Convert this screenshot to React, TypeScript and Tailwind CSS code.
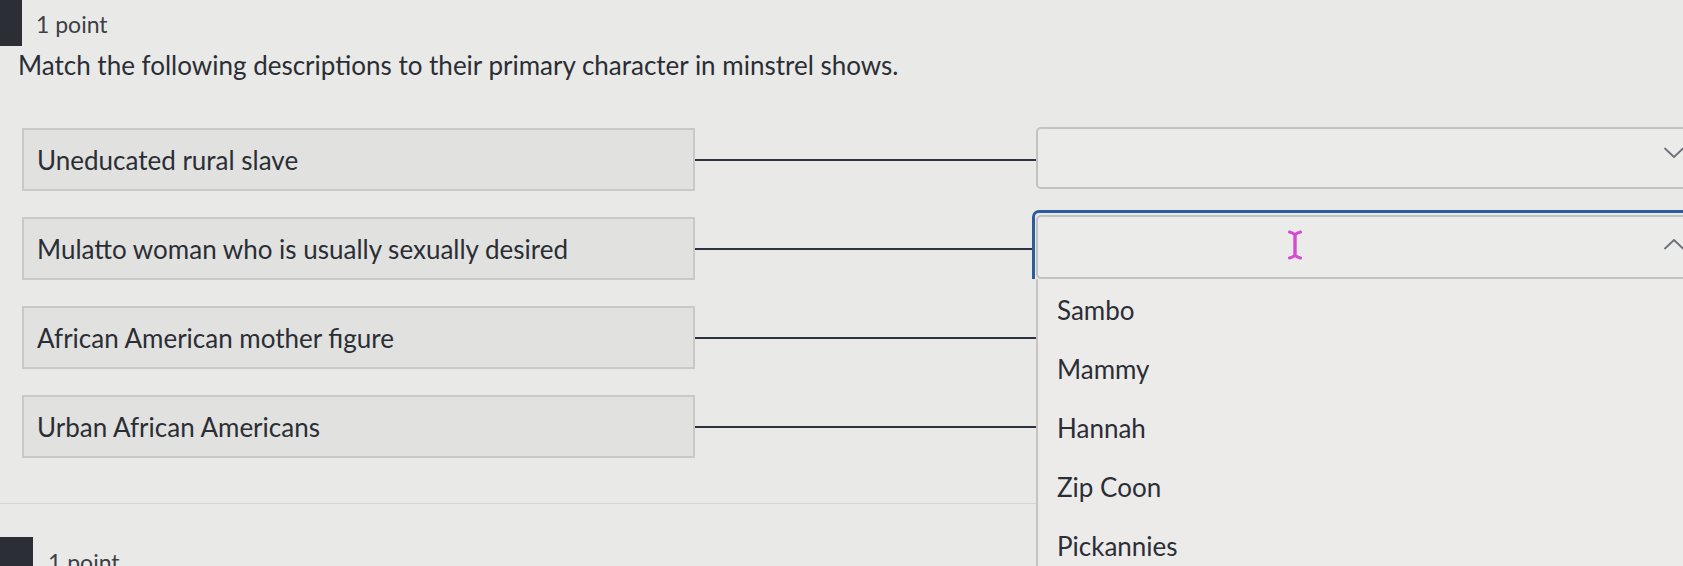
import React from "react";

const rows = [
  "Uneducated rural slave",
  "Mulatto woman who is usually sexually desired",
  "African American mother figure",
  "Urban African Americans",
];

const options = ["Sambo", "Mammy", "Hannah", "Zip Coon", "Pickannies"];

function ChevronDown() {
  return (
    <svg width="20" height="12" viewBox="0 0 20 12" fill="none">
      <polyline points="1,1.5 10,10 19,1.5" stroke="#6d7076" strokeWidth="1.8" strokeLinecap="round" strokeLinejoin="round" />
    </svg>
  );
}

function ChevronUp() {
  return (
    <svg width="20" height="12" viewBox="0 0 20 12" fill="none">
      <polyline points="1,10.5 10,2 19,10.5" stroke="#6d7076" strokeWidth="1.8" strokeLinecap="round" strokeLinejoin="round" />
    </svg>
  );
}

function IBeam() {
  return (
    <svg width="14" height="30" viewBox="0 0 14 30" fill="none">
      <path d="M1.5 2 Q4 2.5 7 4.5 Q10 2.5 12.5 2" stroke="#d44bd2" strokeWidth="3" strokeLinecap="round" />
      <path d="M1.5 28 Q4 27.5 7 25.5 Q10 27.5 12.5 28" stroke="#d44bd2" strokeWidth="3" strokeLinecap="round" />
      <line x1="7" y1="4" x2="7" y2="26" stroke="#d44bd2" strokeWidth="3.4" />
    </svg>
  );
}

export default function App() {
  return (
    <div className="relative w-[1683px] h-[566px] overflow-hidden bg-[#e9e9e7] font-['Lato','Open_Sans',sans-serif] text-[#2b2e35]">
      {/* header */}
      <div className="flex items-start h-[46px]">
        <div className="w-[22px] h-[46px] bg-[#2b2e34]" />
        <span className="ml-[14px] mt-[10px] text-[23px] leading-[28px] text-[#3c3f46]">1 point</span>
      </div>

      <p className="ml-[18px] mt-[4px] text-[26px] leading-[30px] text-[#2b2e35]">
        Match the following descriptions to their primary character in minstrel shows.
      </p>

      {/* matching rows */}
      <div className="mt-[48px] flex flex-col gap-[26px]">
        {rows.map((text, i) => (
          <div key={text} className="flex items-center h-[63px]">
            <div className="ml-[22px] w-[673px] h-[63px] shrink-0 flex items-center pl-[13px] bg-[#e1e1df] border-2 border-[#c9c9c7] text-[26px] leading-[30px]">
              {text}
            </div>
            <div className={(i === 1 ? "w-[337px]" : "w-[341px]") + " h-[2px] shrink-0 bg-[#2e3340]"} />
            {i === 0 && (
              <div className="w-[670px] shrink-0 h-[62px] -mt-[4px] flex items-center justify-end pr-[20px] bg-[#ebebea] border-2 border-[#c2c2c0] rounded-[5px]">
                <div className="-mt-[10px]">
                  <ChevronDown />
                </div>
              </div>
            )}
            {i === 1 && (
              <div className="relative w-[674px] shrink-0 -mt-[8px]">
                <div className="pt-[2px] pl-[1px] border-t-[3px] border-l-[3px] border-[#2c5c9b] rounded-tl-[7px]">
                  <div className="relative h-[64px] flex items-center justify-end pr-[20px] bg-[#ebebea] border-2 border-[#c2c2c0] rounded-[5px]">
                    <div className="absolute left-[250px] top-[13px]">
                      <IBeam />
                    </div>
                    <div className="-mt-[6px]">
                      <ChevronUp />
                    </div>
                  </div>
                </div>
                {/* open listbox */}
                <ul className="absolute left-[4px] top-full w-[670px] h-[300px] pt-[1px] bg-[#ecebea] border-l-2 border-[#c4c4c2] z-10">
                  {options.map((o) => (
                    <li key={o} className="h-[59px] flex items-center pl-[19px] text-[26px] leading-[30px] text-[#2b2e35]">
                      {o}
                    </li>
                  ))}
                </ul>
              </div>
            )}
          </div>
        ))}
      </div>

      {/* separator */}
      <div className="mt-[45px] h-[1px] bg-[#d5d5d3]" />

      {/* next question */}
      <div className="mt-[33px] flex items-start">
        <div className="w-[33px] h-[30px] bg-[#2b2e34]" />
        <span className="ml-[15px] mt-[11px] text-[23px] leading-[28px] text-[#3c3f46]">1 point</span>
      </div>
    </div>
  );
}
